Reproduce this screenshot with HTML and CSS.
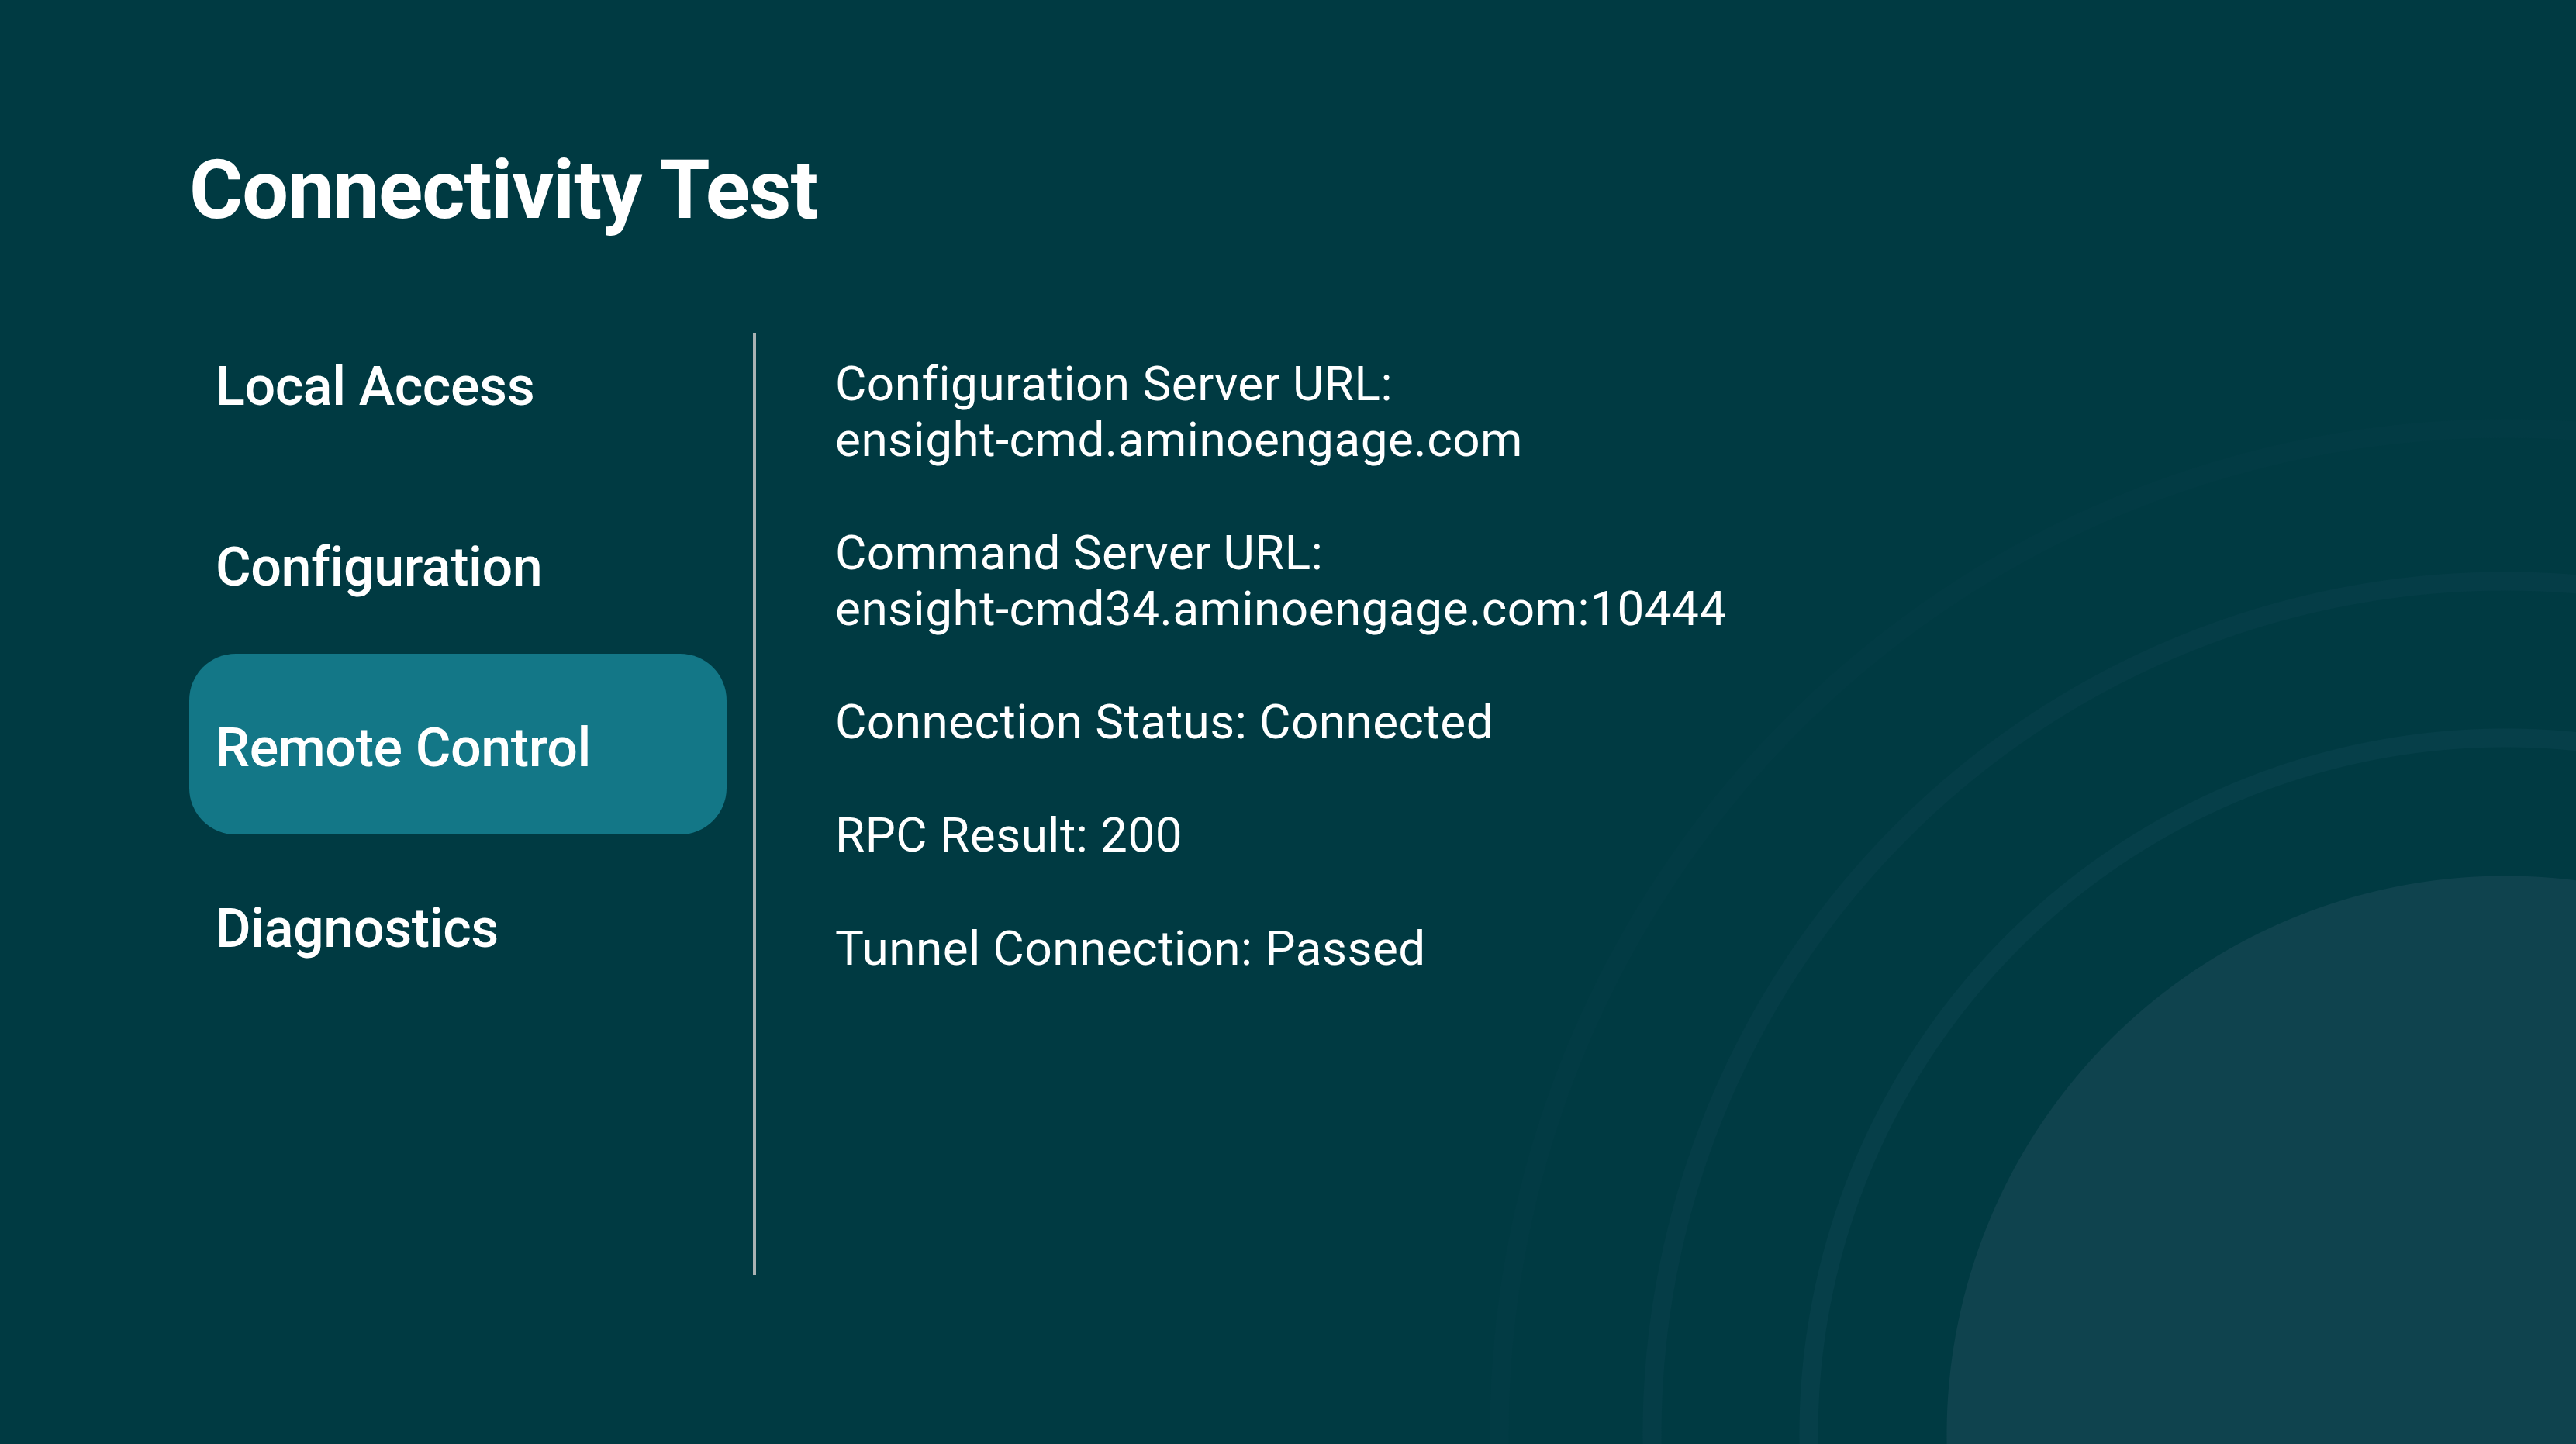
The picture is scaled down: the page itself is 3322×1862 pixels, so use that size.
FILE: index.html
```html
<!DOCTYPE html>
<html lang="en">

<head>
    <meta charset="UTF-8">
    <meta name="viewport" content="width=device-width, initial-scale=1">
    <title>Connectivity Test</title>
    <link rel="stylesheet" href="styles.css">
</head>

<body>
    <div class="screen">
        <h1>Connectivity Test</h1>

        <div class="content">
            <ul class="menu">
                <li class="menu-item">Local Access</li>
                <li class="menu-item">Configuration</li>
                <li class="menu-item active">Remote Control</li>
                <li class="menu-item">Diagnostics</li>
            </ul>

            <div class="divider"></div>

            <div class="details">
                <p>Configuration Server URL:<br>ensight-cmd.aminoengage.com</p>
                <p>Command Server URL:<br>ensight-cmd34.aminoengage.com:10444</p>
                <p>Connection Status: Connected</p>
                <p>RPC Result: 200</p>
                <p>Tunnel Connection: Passed</p>
            </div>
        </div>
    </div>
</body>

</html>
```

FILE: styles.css
```css
html,
body {
    margin: 0;
    height: 100%;
}

body {
    overflow: hidden;
    color: #ffffff;
    font-family: 'Roboto', 'Noto Sans', sans-serif;
    background-color: #003a42;
    /* decorative rings in the bottom right corner */
    background-image: radial-gradient(circle at 3231px 1850px,
            #0f434e 0 720px,
            #003a42 721px 886px,
            #063f49 887px 910px,
            #003a42 911px 1088px,
            #053d47 1089px 1112px,
            #003a42 1113px 1285px,
            #023b44 1286px 1309px,
            #003a42 1310px);
}

.screen {
    padding: 183px 0 0 244px;
}

h1 {
    margin: 0;
    font-size: 106px;
    font-weight: 700;
    letter-spacing: -1px;
    line-height: normal;
}

.content {
    display: flex;
    align-items: flex-start;
    margin-top: 70px;
}

.menu {
    list-style: none;
    margin: 0;
    padding: 0;
    width: 693px;
}

.menu-item {
    display: flex;
    align-items: center;
    height: 233px;
    box-sizing: border-box;
    padding: 8px 0 0 34px;
    font-size: 70px;
    font-weight: 500;
    letter-spacing: -0.4px;
    border-radius: 60px;
}

.menu-item.active {
    background: #137787;
}

.divider {
    width: 4px;
    height: 1214px;
    margin: 53px 102px 0 34px;
    background: #a9b2b3;
}

.details {
    padding-top: 82px;
    font-size: 62px;
    letter-spacing: 0.5px;
    line-height: 72px;
}

.details p {
    margin: 0 0 74px;
}
```
